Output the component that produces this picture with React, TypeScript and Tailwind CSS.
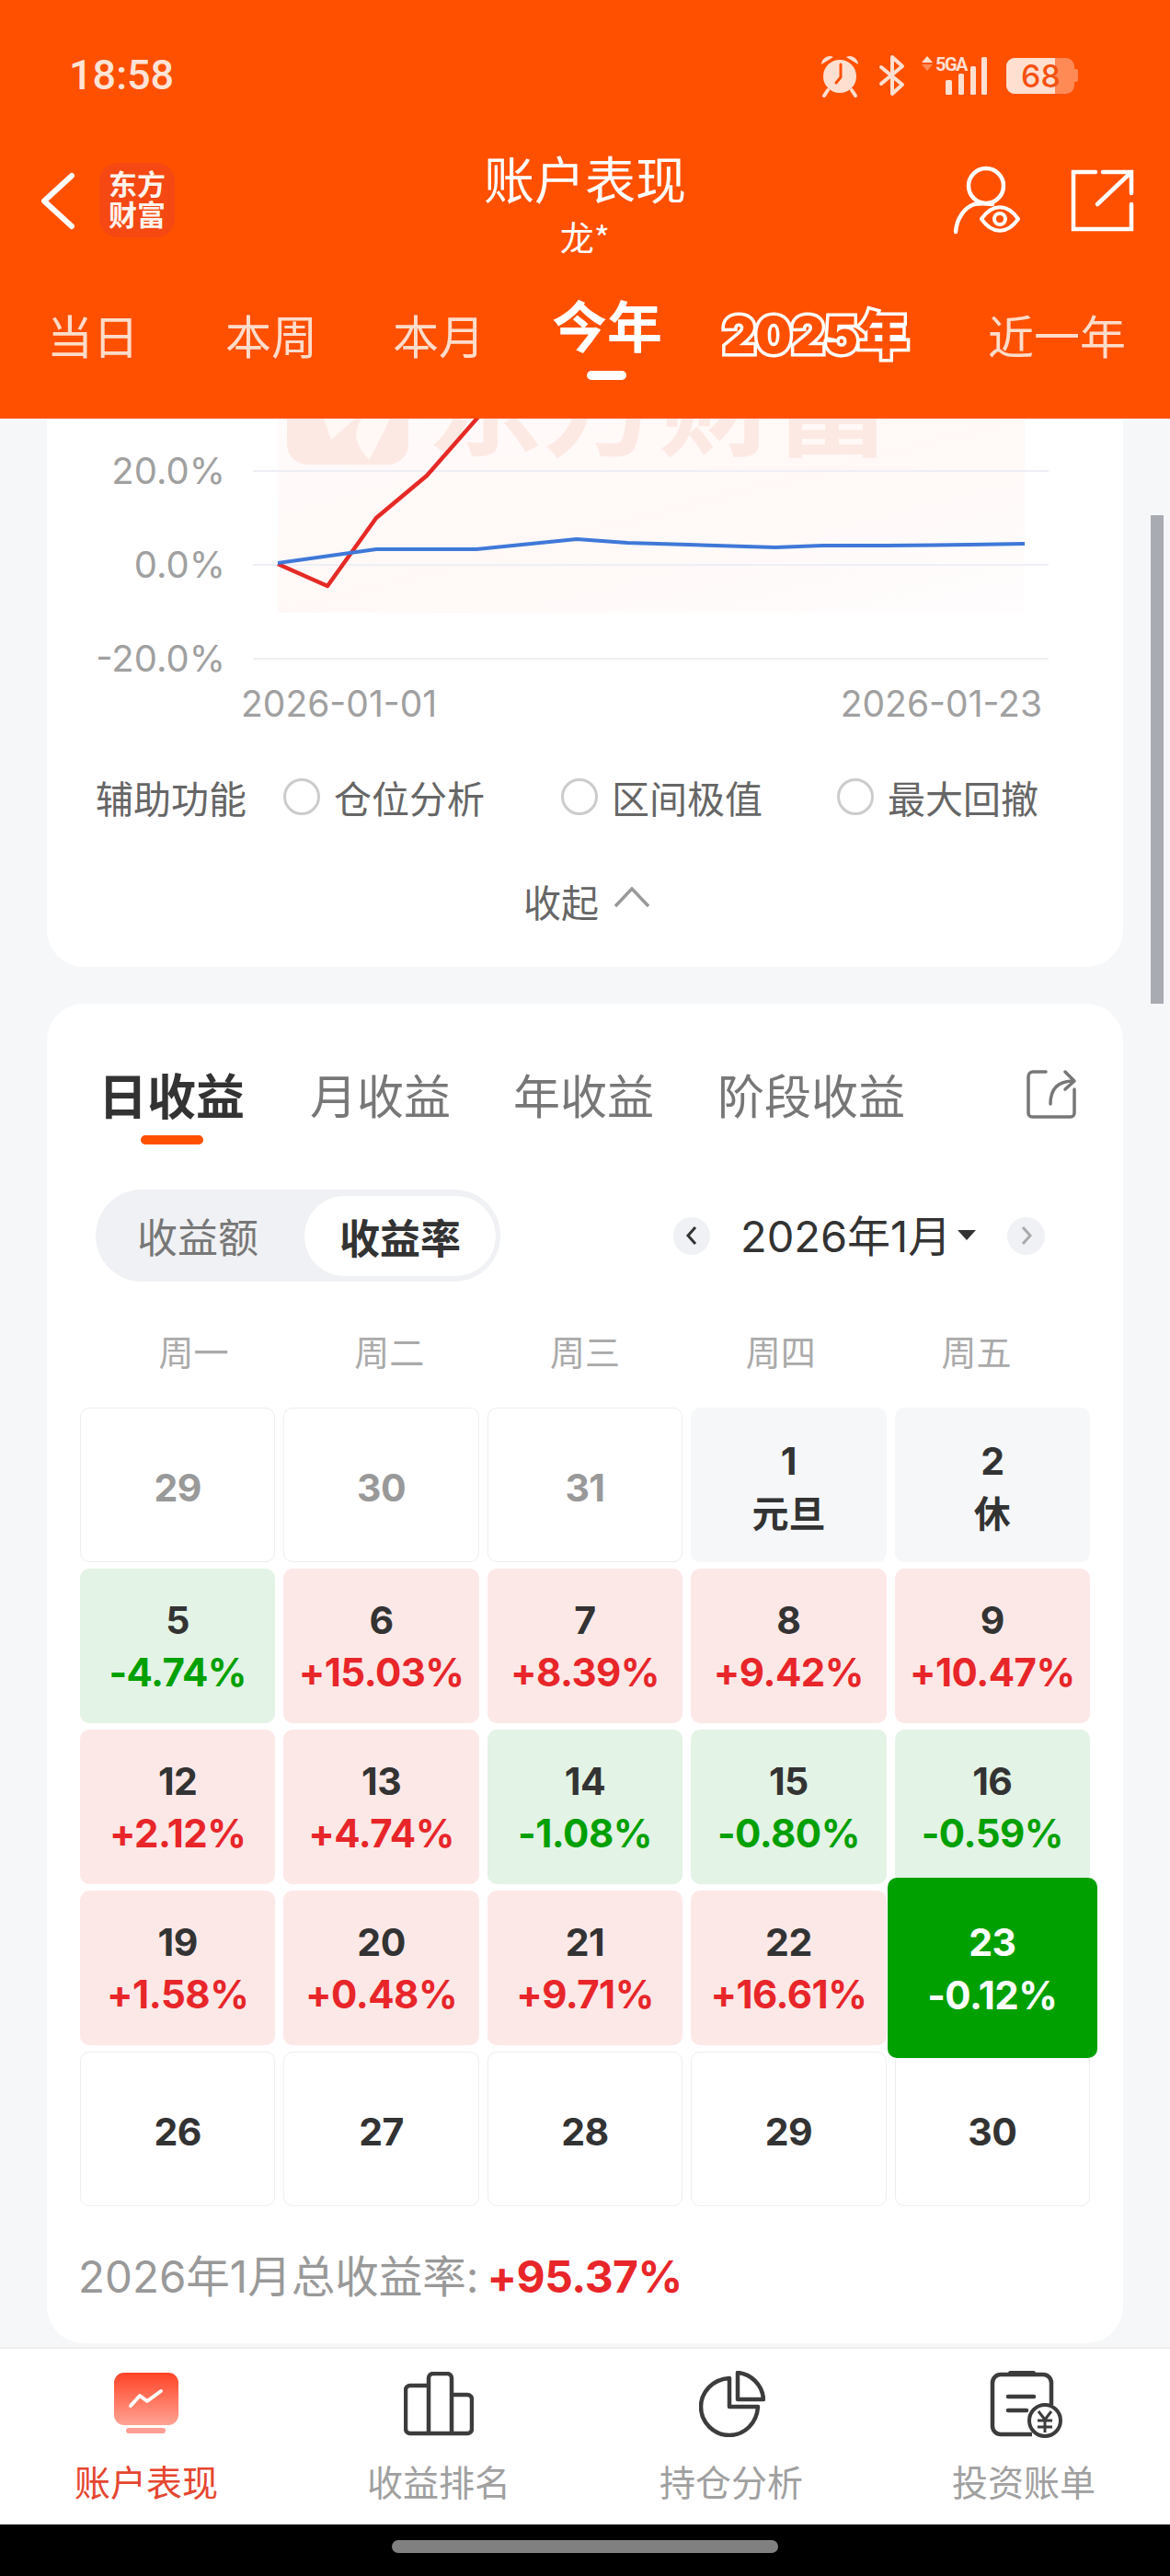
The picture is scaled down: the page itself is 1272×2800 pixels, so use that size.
import React from "react";

const CJK = '"Noto Sans CJK SC","Roboto",sans-serif';

function Status() {
  return (
    <div className="flex h-[120px] items-start relative">
      <div className="ml-[75px] mt-[58px] text-[45px] leading-[48px] font-medium text-[#ffe3d6] font-['Roboto',sans-serif]">18:58</div>
      <svg className="absolute left-[890px] top-[56px]" width="290" height="52" viewBox="890 56 290 52">
        <circle cx="913" cy="83" r="18" fill="#ffdfd0" />
        <path d="M893 70a9 9 0 0 1 13-8zM933 70a9 9 0 0 0-13-8z" fill="#ffdfd0" />
        <path d="M900 98l-4 6M926 98l4 6" stroke="#ffdfd0" strokeWidth="4" strokeLinecap="round" />
        <path d="M914 70v14l-5 6" stroke="#ff5000" strokeWidth="3" fill="none" strokeLinecap="round" />
        <path d="M958 73l23 19-11 10V62l11 10-23 19" fill="none" stroke="#ffdfd0" strokeWidth="4" strokeLinejoin="round" strokeLinecap="round" />
        <path d="M1008 61l6 7h-12z" fill="#ffdfd0" />
        <path d="M1008 77l6-7h-12z" fill="#ff8a55" />
        <rect x="1028" y="87" width="7" height="16" rx="1.5" fill="#ffdfd0" />
        <rect x="1042" y="80" width="6" height="23" rx="1.5" fill="#ffdfd0" />
        <rect x="1055" y="72" width="6" height="31" rx="1.5" fill="#ffdfd0" />
        <rect x="1067" y="62" width="6" height="41" rx="1.5" fill="#ffdfd0" />
      </svg>
      <div className="absolute left-[1017px] top-[58px] w-[33px] text-[20px] leading-[24px] font-bold text-[#ffdfd0] font-['Roboto',sans-serif] tracking-[-1.5px] whitespace-nowrap">5GA</div>
      <div className="absolute left-[1094px] top-[63px] flex h-[39px] w-[74px] items-center overflow-hidden rounded-[9px] bg-[#ff8a55]">
        <div className="h-full w-[53px] bg-[#ffdfd0]" />
        <div className="absolute left-[16px] top-0 text-[34px] leading-[39px] font-medium text-[#f5500f] font-['Inter',sans-serif]">68</div>
      </div>
      <div className="absolute left-[1168px] top-[75px] h-[14px] w-[4px] rounded-r-[2px] bg-[#ff8a55]" />
    </div>
  );
}

function TitleBar() {
  return (
    <div className="relative h-[170px]">
      <svg className="absolute left-[44px] top-[67px]" width="40" height="64" viewBox="44 187 40 64">
        <path d="M78 191L48 218.500L78 246" fill="none" stroke="#fff" strokeWidth="6" strokeLinecap="round" strokeLinejoin="round" />
      </svg>
      <div className="absolute left-[108px] top-[57px] flex h-[81px] w-[82px] flex-col items-center justify-center rounded-[20px] bg-[#f54812] pb-[5px] text-[31px] leading-[33px] font-bold text-[#fff3ec]">
        <span>东方</span>
        <span>财富</span>
      </div>
      <div className="flex flex-col items-center pt-[38px]">
        <div className="text-[55px] leading-[68px] text-[#fff]">账户表现</div>
        <div className="mt-[8px] text-[37px] leading-[46px] text-[#fff]">龙*</div>
      </div>
      <svg className="absolute left-[1030px] top-[60px]" width="210" height="80" viewBox="1030 180 210 80">
        <circle cx="1072" cy="202" r="19" fill="none" stroke="#fff" strokeWidth="4.500" />
        <path d="M1059 222c-11 4-19 16-20 30M1059 222c6-1 13-1 20 0" fill="none" stroke="#fff" strokeWidth="4.500" strokeLinecap="round" />
        <path d="M1067 238c12-17 28-17 40 0c-12 17-28 17-40 0z" fill="#ff5000" stroke="#fff" strokeWidth="4" strokeLinejoin="round" />
        <circle cx="1087" cy="238" r="6" fill="none" stroke="#fff" strokeWidth="4" />
        <path d="M1191 187h-24v62h63v-27M1199 187h31v23M1193 222l37-35" fill="none" stroke="#fff" strokeWidth="4.500" strokeLinecap="round" />
      </svg>
    </div>
  );
}

function PeriodTabs() {
  const tab = "mt-[43px] text-[50px] leading-[60px] text-[#ffdcca]";
  return (
    <div className="flex h-[165px] items-start pl-[51px]">
      <span className={tab}>当日</span>
      <span className={`ml-[94px] ${tab}`}>本周</span>
      <span className={`ml-[82px] ${tab}`}>本月</span>
      <div className="relative ml-[73px] mt-[27px]">
        <span className="block text-[60px] leading-[70px] font-bold text-[#fff]">今年</span>
        <div className="absolute left-[38px] top-[86px] h-[10px] w-[43px] rounded-full bg-white" />
      </div>
      <span className="ml-[66px] mt-[39px] whitespace-nowrap text-[55px] leading-[70px] font-black text-[#ff5000] font-['Inter','Noto_Sans_CJK_SC',sans-serif] [-webkit-text-stroke:7px_#fff] [paint-order:stroke_fill]">2025年</span>
      <span className={`ml-auto mr-[48px] ${tab}`}>近一年</span>
    </div>
  );
}

function Chart() {
  const label = "absolute text-[40px] leading-[50px] text-[#a0a0a0] font-['Inter',sans-serif]";
  const date = "absolute text-[39px] leading-[50px] text-[#a0a0a0] font-['Inter',sans-serif]";
  return (
    <div className="relative h-[350px] w-full overflow-hidden">
      <div className="absolute left-[251px] top-0 h-[211px] w-[812px] bg-gradient-to-br from-[#fffbfb] via-[#fff8f6] to-[#fffdfe]" />
      <svg className="absolute left-0 top-0" width="1170" height="350" viewBox="51 455 1170 350">
        <rect x="312" y="400" width="132" height="105" rx="22" fill="#fde9e3" />
        <path d="M352 455l8 23 26-23z" fill="#fff8f5" />
        <path d="M393 455c-8 14-10 24 8 45c8-14 16-30 23-45z" fill="#fff8f5" />
        <text x="464" y="486" fontSize="126" fontWeight="700" fill="#fde9e3" fontFamily='"Noto Sans CJK SC",sans-serif'>东方财富</text>
        <path d="M275 512H1140M275 614H1140M275 716H1140" stroke="#eeeef5" strokeWidth="2" fill="none" />
        <path d="M302 613L356 637L409 563L464 517L521 452" fill="none" stroke="#e52a26" strokeWidth="4.500" strokeLinejoin="round" />
        <path d="M302 612L409 597L518 597L627 586L682 590L843 595L894 593L963 593L1055 592L1114 591" fill="none" stroke="#3f78d8" strokeWidth="4" strokeLinejoin="round" />
      </svg>
      <span className={`${label} right-[976px] top-[32px]`}>20.0%</span>
      <span className={`${label} right-[976px] top-[134px]`}>0.0%</span>
      <span className={`${label} right-[976px] top-[236px]`}>-20.0%</span>
      <span className={`${date} left-[211px] top-[285px]`}>2026-01-01</span>
      <span className={`${date} right-[88px] top-[285px]`}>2026-01-23</span>
    </div>
  );
}

function Radio({ label, w }: { label: string; w: string }) {
  return (
    <div className={`flex items-center ${w}`}>
      <span className="h-[40px] w-[40px] rounded-full border-[3px] border-[#ccc]" />
      <span className="ml-[15px] text-[41px] leading-[50px] text-[#666]">{label}</span>
    </div>
  );
}

function Card1() {
  return (
    <section className="mx-[51px] h-[596px] rounded-b-[40px] bg-white">
      <Chart />
      <div className="mt-[36px] flex h-[50px] items-center pl-[53px]">
        <span className="w-[204px] text-[41px] leading-[50px] text-[#666]">辅助功能</span>
        <Radio label="仓位分析" w="w-[302px]" />
        <Radio label="区间极值" w="w-[300px]" />
        <Radio label="最大回撤" w="" />
      </div>
      <div className="mt-[63px] flex items-center justify-center">
        <span className="ml-[4px] text-[41px] leading-[50px] text-[#666]">收起</span>
        <svg className="ml-[16px] mt-[-8px]" width="40" height="24" viewBox="0 0 40 24">
          <path d="M2 22L20 3L38 22" fill="none" stroke="#999" strokeWidth="3.500" />
        </svg>
      </div>
    </section>
  );
}

type Cell = { d: string; s?: string; k: "blank" | "prev" | "hol" | "up" | "down" | "today" };

const rows: Cell[] = [
  { d: "29", k: "prev" }, { d: "30", k: "prev" }, { d: "31", k: "prev" }, { d: "1", s: "元旦", k: "hol" }, { d: "2", s: "休", k: "hol" },
  { d: "5", s: "-4.74%", k: "down" }, { d: "6", s: "+15.03%", k: "up" }, { d: "7", s: "+8.39%", k: "up" }, { d: "8", s: "+9.42%", k: "up" }, { d: "9", s: "+10.47%", k: "up" },
  { d: "12", s: "+2.12%", k: "up" }, { d: "13", s: "+4.74%", k: "up" }, { d: "14", s: "-1.08%", k: "down" }, { d: "15", s: "-0.80%", k: "down" }, { d: "16", s: "-0.59%", k: "down" },
  { d: "19", s: "+1.58%", k: "up" }, { d: "20", s: "+0.48%", k: "up" }, { d: "21", s: "+9.71%", k: "up" }, { d: "22", s: "+16.61%", k: "up" }, { d: "23", s: "-0.12%", k: "today" },
  { d: "26", k: "blank" }, { d: "27", k: "blank" }, { d: "28", k: "blank" }, { d: "29", k: "blank" }, { d: "30", k: "blank" },
];

function CalCell({ c }: { c: Cell }) {
  const num = "text-[41px] leading-[50px] font-bold tracking-[-0.5px] font-['Inter',sans-serif]";
  const pct = "text-[42px] leading-[56px] font-bold tracking-[-0.5px] font-['Inter',sans-serif] whitespace-nowrap";
  if (c.k === "prev" || c.k === "blank") {
    return (
      <div className="flex h-[168px] items-center justify-center rounded-[10px] border border-[#eeeeee] bg-white pt-[6px]">
        <span className={`${num} ${c.k === "prev" ? "text-[#999]" : "text-[#333]"}`}>{c.d}</span>
      </div>
    );
  }
  if (c.k === "today") {
    return (
      <div className="relative h-[168px]">
        <div className="absolute -inset-x-[8px] -inset-y-[14px] z-10 flex flex-col items-center justify-center rounded-[10px] bg-[#00a000] pt-[4px]">
          <span className={`${num} text-white`}>{c.d}</span>
          <span className={`${pct} mt-[5px] text-white`}>{c.s}</span>
        </div>
      </div>
    );
  }
  const bg = c.k === "up" ? "bg-[#fde8e8]" : c.k === "down" ? "bg-[#e3f3e5]" : "bg-[#f5f7f9]";
  const fg = c.k === "up" ? "text-[#e8262a]" : c.k === "down" ? "text-[#00a000]" : "text-[#333]";
  return (
    <div className={`flex h-[168px] flex-col items-center justify-center rounded-[10px] pt-[3px] ${bg}`}>
      <span className={`${num} text-[#333]`}>{c.d}</span>
      {c.k === "hol" ? (
        <span className="mt-[5px] text-[40px] leading-[50px] font-bold text-[#333]">{c.s}</span>
      ) : (
        <span className={`${pct} mt-[4px] ${fg}`}>{c.s}</span>
      )}
    </div>
  );
}

function Card2() {
  return (
    <section className="mx-[51px] mt-[40px] h-[1456px] rounded-[40px] bg-white">
      <div className="relative flex items-center pl-[56px] pt-[66px]">
        <span className="text-[53px] leading-[64px] font-bold text-[#333]">日收益</span>
        <span className="ml-[71px] text-[51px] leading-[64px] text-[#777]">月收益</span>
        <span className="ml-[68px] text-[51px] leading-[64px] text-[#777]">年收益</span>
        <span className="ml-[69px] text-[51px] leading-[64px] text-[#777]">阶段收益</span>
        <svg className="absolute left-[1064px] top-[71px]" width="56" height="54" viewBox="0 0 56 54">
          <path d="M22 3H8a5 5 0 0 0-5 5v40a4 4 0 0 0 4 4h42a4 4 0 0 0 4-4V22" fill="none" stroke="#777" strokeWidth="3.500" strokeLinecap="round" />
          <path d="M27 38c0-16 8-25 25-25M43 3l10 10-10 9" fill="none" stroke="#777" strokeWidth="3.500" strokeLinecap="round" strokeLinejoin="round" />
        </svg>
      </div>
      <div className="ml-[102px] mt-[13px] h-[10px] w-[68px] rounded-full bg-[#ff5000]" />
      <div className="relative mt-[49px] flex h-[100px] items-center pl-[53px]">
        <div className="relative flex h-[100px] w-[440px] items-center rounded-full bg-[#f0f1f4]">
          <span className="ml-[45px] text-[44px] leading-[56px] text-[#777]">收益额</span>
          <div className="absolute left-[227px] top-[7px] flex h-[87px] w-[208px] items-center justify-center rounded-full bg-white">
            <span className="text-[44px] leading-[56px] font-bold text-[#333]">收益率</span>
          </div>
        </div>
        <div className="ml-[188px] flex h-[41px] w-[40px] items-center justify-center rounded-full bg-[#f0f1f4]">
          <svg width="14" height="22" viewBox="0 0 14 22"><path d="M11 2L3 11L11 20" fill="none" stroke="#333" strokeWidth="3" /></svg>
        </div>
        <span className="ml-[33px] mt-[2px] w-[228px] whitespace-nowrap text-[47px] leading-[56px] text-[#333] font-['Inter','Noto_Sans_CJK_SC',sans-serif]">2026年1月</span>
        <svg className="ml-[8px]" width="20" height="12" viewBox="0 0 20 12"><path d="M0 0H20L10 11z" fill="#333" /></svg>
        <div className="ml-[34px] flex h-[41px] w-[41px] items-center justify-center rounded-full bg-[#f0f1f4]">
          <svg width="14" height="22" viewBox="0 0 14 22"><path d="M3 2L11 11L3 20" fill="none" stroke="#aaa" strokeWidth="3" /></svg>
        </div>
      </div>
      <div className="mt-[50px] grid grid-cols-5 px-[53px]">
        {["周一", "周二", "周三", "周四", "周五"].map((w) => (
          <span key={w} className="text-center text-[38px] leading-[50px] text-[#aaa]">{w}</span>
        ))}
      </div>
      <div className="mt-[37px] grid grid-cols-5 gap-x-[9px] gap-y-[7px] px-[36px]">
        {rows.map((c, i) => <CalCell key={i} c={c} />)}
      </div>
      <div className="mt-[47px] flex items-baseline pl-[34px]">
        <span className="text-[47.5px] leading-[60px] text-[#999] font-['Inter','Noto_Sans_CJK_SC',sans-serif]">2026年1月总收益率:</span>
        <span className="ml-[9px] text-[48px] leading-[60px] font-bold tracking-[-0.5px] text-[#e8262a] font-['Inter',sans-serif]">+95.37%</span>
      </div>
    </section>
  );
}

function NavItem({ label, active, children }: { label: string; active?: boolean; children: React.ReactNode }) {
  return (
    <div className="flex flex-col items-center">
      <div className="flex h-[76px] items-center justify-center">{children}</div>
      <span className={`mt-[21px] text-[39px] leading-[48px] ${active ? "text-[#e54630]" : "text-[#a0a0a0]"}`}>{label}</span>
    </div>
  );
}

function Nav() {
  return (
    <nav className="grid h-[193px] grid-cols-4 border-t-2 border-[#eeeeee] bg-white pt-[22px]">
      <NavItem label="账户表现" active>
        <svg width="72" height="68" viewBox="0 0 72 68">
          <defs>
            <linearGradient id="g1" x1="0" y1="0" x2="0" y2="1">
              <stop offset="0" stopColor="#ff4426" />
              <stop offset="1" stopColor="#ffa394" />
            </linearGradient>
          </defs>
          <rect x="1" y="0" width="70" height="57" rx="11" fill="url(#g1)" />
          <rect x="14" y="60" width="43" height="6" rx="3" fill="#ff9f95" />
          <path d="M19 36L29 25L37 31L52 20" fill="none" stroke="#fff" strokeWidth="4" strokeLinecap="round" strokeLinejoin="round" />
        </svg>
      </NavItem>
      <NavItem label="收益排名">
        <svg width="76" height="70" viewBox="0 0 76 70">
          <path d="M27 15H7a5 5 0 0 0-5 5v42a5 5 0 0 0 5 5h62a5 5 0 0 0 5-5V30a5 5 0 0 0-5-5H52M27 67V7a5 5 0 0 1 5-5h15a5 5 0 0 1 5 5v60" fill="none" stroke="#3c3c3c" strokeWidth="4.500" />
        </svg>
      </NavItem>
      <NavItem label="持仓分析">
        <svg className="ml-[2px]" width="72" height="72" viewBox="0 0 72 72">
          <path d="M33 8C15 9 2 23 2 39c0 17 14 31 31 31c16 0 30-13 31-31H33z" fill="none" stroke="#3c3c3c" strokeWidth="4.500" strokeLinejoin="round" />
          <path d="M42 2c14 1 27 13 28 29H42z" fill="none" stroke="#3c3c3c" strokeWidth="4.500" strokeLinejoin="round" />
        </svg>
      </NavItem>
      <NavItem label="投资账单">
        <svg className="ml-[8px]" width="82" height="74" viewBox="0 0 82 74">
          <path d="M46 70H12a9 9 0 0 1-9-9V14a9 9 0 0 1 9-9h46a9 9 0 0 1 9 9v24" fill="none" stroke="#3c3c3c" strokeWidth="4.500" />
          <rect x="20" y="1" width="30" height="5" rx="2.500" fill="#3c3c3c" />
          <path d="M20 29H48M20 44H40" stroke="#3c3c3c" strokeWidth="4.500" strokeLinecap="round" />
          <circle cx="60" cy="55" r="17" fill="#fff" stroke="#3c3c3c" strokeWidth="4" />
          <path d="M53 45l7 9 7-9M52 55h16M52 62h16M60 54v14" fill="none" stroke="#3c3c3c" strokeWidth="3" />
        </svg>
      </NavItem>
    </nav>
  );
}

export default function App() {
  return (
    <div className="relative h-[2800px] w-[1272px] overflow-hidden bg-[#f5f7f9]" style={{ fontFamily: CJK }}>
      <header className="relative z-20 h-[455px] bg-[#ff5000]">
        <Status />
        <TitleBar />
        <PeriodTabs />
      </header>
      <Card1 />
      <Card2 />
      <div className="mt-[4px]"><Nav /></div>
      <div className="flex h-[56px] items-center justify-center bg-black pb-[8px]">
        <div className="h-[14px] w-[420px] rounded-full bg-[#808080]" />
      </div>
      <div className="absolute left-[1251px] top-[560px] h-[531px] w-[14px] bg-[#a9abb3]" />
    </div>
  );
}
